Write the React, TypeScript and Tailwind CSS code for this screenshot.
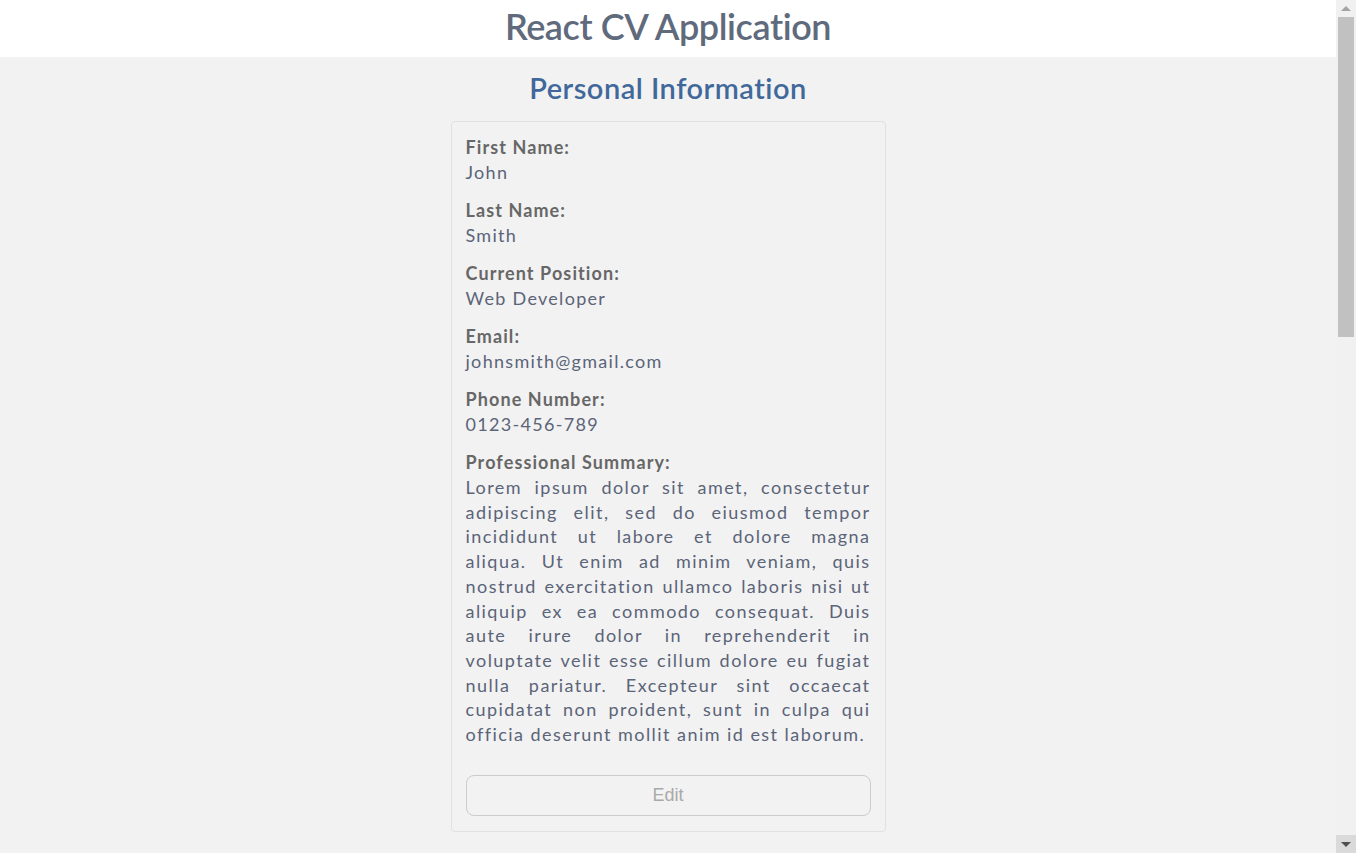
const personal = [
  { label: "First Name:", value: "John" },
  { label: "Last Name:", value: "Smith" },
  { label: "Current Position:", value: "Web Developer" },
  { label: "Email:", value: "johnsmith@gmail.com" },
  { label: "Phone Number:", value: "0123-456-789" },
];

// summary kept line by line so the justified wrap matches the layout
const summaryLines = [
  "Lorem ipsum dolor sit amet, consectetur",
  "adipiscing elit, sed do eiusmod tempor",
  "incididunt ut labore et dolore magna",
  "aliqua. Ut enim ad minim veniam, quis",
  "nostrud exercitation ullamco laboris nisi ut",
  "aliquip ex ea commodo consequat. Duis",
  "aute irure dolor in reprehenderit in",
  "voluptate velit esse cillum dolore eu fugiat",
  "nulla pariatur. Excepteur sint occaecat",
  "cupidatat non proident, sunt in culpa qui",
  "officia deserunt mollit anim id est laborum.",
];

const Label = ({ children }: { children: React.ReactNode }) => (
  <p className="font-bold text-[#676767] text-[18px] leading-[25px] tracking-[1.1px]">{children}</p>
);

const Field = ({ label, value }: { label: string; value: string }) => (
  <div className="mb-[13px]">
    <Label>{label}</Label>
    <p className="text-[#5b6478] text-[18px] leading-[25px] tracking-[1.3px]">{value}</p>
  </div>
);

const Scrollbar = () => (
  <aside className="w-[20px] h-full flex flex-col bg-[#f1f1f1]">
    <div className="h-[17px] flex items-center justify-center">
      <div className="w-0 h-0 border-x-[5px] border-x-transparent border-b-[5px] border-b-[#a3a3a3]" />
    </div>
    <div className="mx-[2px] h-[320px] bg-[#c1c1c1]" />
    <div className="flex-1" />
    <div className="h-[18px] bg-[#dadada] flex items-center justify-center">
      <div className="w-0 h-0 border-x-[5px] border-x-transparent border-t-[5px] border-t-[#505050]" />
    </div>
  </aside>
);

export default function App() {
  return (
    <div className="h-screen flex overflow-hidden font-['Lato','Source_Sans_Pro',sans-serif]">
      <main className="flex-1 h-full overflow-hidden bg-[#f2f2f2]">
        <header className="bg-white h-[57px] pb-[6px] flex items-center justify-center">
          <h1 className="text-[36px] font-semibold text-[#5f6a7c] tracking-[-0.4px]">React CV Application</h1>
        </header>

        <section className="flex flex-col items-center">
          <h2 className="text-[29px] leading-[36px] font-semibold text-[#41689a] tracking-[0.5px] mt-[13px] mb-[15px]">
            Personal Information
          </h2>
          <div className="w-[435px] border border-[#e1e1e1] rounded-[4px] px-[14px] pt-[13px] pb-[15px]">
            {personal.map((f) => (
              <Field key={f.label} label={f.label} value={f.value} />
            ))}
            <div>
              <Label>Professional Summary:</Label>
              <p className="text-[#5b6478] text-[18px] leading-[24.7px] tracking-[1.45px]">
                {summaryLines.map((line, i) => (
                  <span
                    key={i}
                    className={
                      i < summaryLines.length - 1
                        ? "block text-justify [text-align-last:justify]"
                        : "block"
                    }
                  >
                    {line}
                  </span>
                ))}
              </p>
            </div>
            <button className="w-full h-[41px] mt-[28px] rounded-lg border border-[#cccccc] text-[#a9a9a9] text-[18px] font-['Liberation_Sans',Arial,sans-serif]">
              Edit
            </button>
          </div>
        </section>
      </main>
      <Scrollbar />
    </div>
  );
}
